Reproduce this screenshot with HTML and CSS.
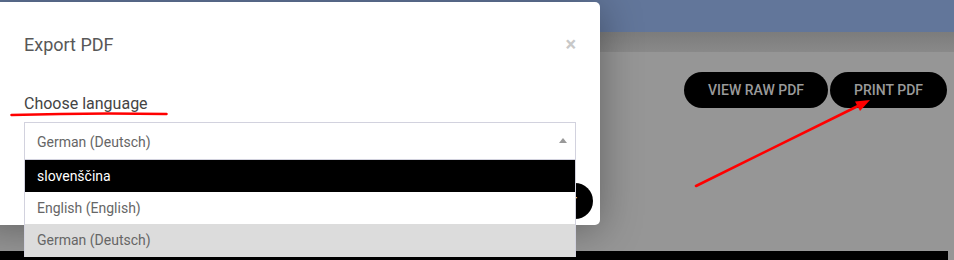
FILE: index.html
```html
<!DOCTYPE html>
<html>
<head>
<meta charset="utf-8">
<link rel="stylesheet" href="styles.css">
</head>
<body>
<div class="page">
  <div class="navbar"></div>
  <div class="subbar"></div>
  <div class="toolbar">
    <button class="pill">View raw PDF</button>
    <button class="pill">Print PDF</button>
  </div>
  <div class="doc"></div>
</div>

<div class="modal">
  <div class="modal-header">
    <h4 class="modal-title">Export PDF</h4>
    <span class="close">&times;</span>
  </div>
  <div class="modal-body">
    <label class="field-label">Choose language</label>
    <div class="select-wrap">
      <div class="select">
        <span class="select-value">German (Deutsch)</span>
        <span class="caret-up"></span>
      </div>
      <ul class="dropdown">
        <li class="opt opt-active">slovenščina</li>
        <li class="opt">English (English)</li>
        <li class="opt opt-selected">German (Deutsch)</li>
      </ul>
    </div>
  </div>
  <div class="modal-footer">
    <button class="export-btn">Export</button>
  </div>
</div>

<svg class="annotations" width="954" height="260" viewBox="0 0 954 260">
  <path d="M11.5 115 Q 90 112.5 166.5 114" fill="none" stroke="#ff0000" stroke-width="2.5" stroke-linecap="round"/>
  <line x1="696" y1="186" x2="860" y2="105" stroke="#ff0000" stroke-width="2.6" stroke-linecap="round"/>
  <polygon points="870,100 860,111 855,101.5" fill="#ff0000"/>
</svg>
</body>
</html>
```

FILE: styles.css
```css
html, body {
  margin: 0;
  padding: 0;
}
body {
  width: 954px;
  height: 260px;
  overflow: hidden;
  position: relative;
  background: #969696;
  font-family: Roboto, "Liberation Sans", Arial, sans-serif;
}
.page {
  display: flex;
  flex-direction: column;
}
.navbar {
  height: 32px;
  background: #62769a;
}
.subbar {
  height: 20px;
  background: linear-gradient(#7c7c7c, #898989);
}
.toolbar {
  display: flex;
  justify-content: flex-end;
  gap: 2px;
  padding: 20px 7px 0 0;
}
.pill {
  height: 36px;
  padding: 0 24px;
  border: none;
  border-radius: 18px;
  background: #000;
  color: #9a9a9a;
  font-family: Roboto, "Liberation Sans", Arial, sans-serif;
  font-size: 14px;
  font-weight: 500;
  text-transform: uppercase;
}
.doc {
  margin-top: 143px;
  margin-right: 6px;
  height: 20px;
  background: #000;
}

.modal {
  position: absolute;
  left: -20px;
  top: 2px;
  width: 620px;
  height: 223px;
  box-sizing: border-box;
  background: #fff;
  border-radius: 5px;
  box-shadow: 0 5px 40px rgba(0, 0, 0, 0.35);
  padding-left: 20px;
}
.modal-header {
  display: flex;
  justify-content: space-between;
  align-items: flex-start;
  padding: 32px 24px 0 24px;
}
.modal-title {
  margin: 0;
  font-size: 18px;
  line-height: 22px;
  font-weight: 400;
  color: #585858;
}
.close {
  font-size: 20px;
  line-height: 22px;
  font-weight: 700;
  color: #c8c8c8;
  margin-top: -1px;
}
.modal-body {
  padding: 0 24px;
}
.field-label {
  display: block;
  margin-top: 38px;
  margin-bottom: 8px;
  font-size: 16px;
  line-height: 20px;
  color: #444;
}
.select-wrap {
  position: relative;
}
.select {
  height: 38px;
  box-sizing: border-box;
  border: 1px solid #d2d2de;
  display: flex;
  align-items: center;
  justify-content: space-between;
  padding: 1px 8px 0 12px;
}
.select-value {
  font-size: 14px;
  color: #666;
}
.caret-up {
  width: 0;
  height: 0;
  border-left: 4px solid transparent;
  border-right: 4px solid transparent;
  border-bottom: 5px solid #999;
  margin-top: -3px;
}
.dropdown {
  position: absolute;
  top: 100%;
  left: 0;
  right: 0;
  margin: 0;
  padding: 0;
  list-style: none;
  border-left: 1px solid #d2d2de;
  border-right: 1px solid #d2d2de;
  background: #fff;
  z-index: 2;
}
.opt {
  height: 32px;
  line-height: 32px;
  padding-left: 12px;
  font-size: 14px;
  color: #666;
}
.opt-active {
  background: #000;
  color: #fff;
}
.opt-selected {
  height: 33px;
  line-height: 33px;
  background: #dcdcdc;
}
.modal-footer {
  display: flex;
  justify-content: flex-end;
  padding: 23px 7px 0 0;
}
.export-btn {
  height: 36px;
  padding: 0 16px 0 20px;
  border: none;
  border-radius: 18px;
  background: #000;
  color: #fff;
  font-family: Roboto, "Liberation Sans", Arial, sans-serif;
  font-size: 13px;
  font-weight: 500;
  text-transform: uppercase;
}
.annotations {
  position: absolute;
  left: 0;
  top: 0;
  pointer-events: none;
  z-index: 5;
}
```
